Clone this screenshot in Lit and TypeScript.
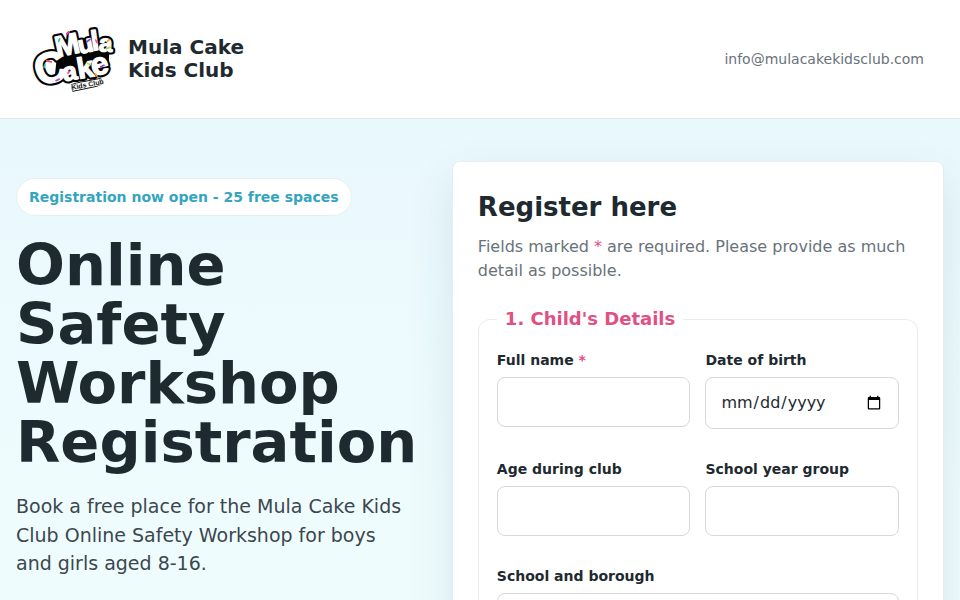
import { LitElement, html, svg, css } from "lit";
import { customElement } from "lit/decorators.js";

interface Letter { ch: string; x: number; y: number; size: number; turn: number }

const letters: Letter[] = [
  { ch: "M", x: 82, y: 114, size: 88, turn: -12 },
  { ch: "u", x: 149, y: 104, size: 74, turn: -12 },
  { ch: "l", x: 187, y: 94, size: 84, turn: -8 },
  { ch: "a", x: 206, y: 96, size: 72, turn: 2 },
  { ch: "C", x: 29, y: 202, size: 130, turn: -18 },
  { ch: "a", x: 103, y: 186, size: 76, turn: -10 },
  { ch: "k", x: 146, y: 179, size: 88, turn: -10 },
  { ch: "e", x: 189, y: 170, size: 94, turn: -12 },
];

const sprinkles = [
  ["#ef4aa5", "M110 44l8-7"], ["#27c9a0", "M86 66l3-8"],
  ["#8a41d8", "M170 68l10-8"], ["#ef4aa5", "M197 62l4 8"],
  ["#f59a35", "M232 66l6-5"], ["#9bdc3c", "M230 88l10-4"],
  ["#ee4258", "M50 124l14 4"], ["#27c9a0", "M42 144l3-8"],
  ["#a347de", "M78 184l10-5"], ["#ef4aa5", "M114 162l4-6"],
  ["#c5d83e", "M172 132l9 4"], ["#f1ae32", "M196 164l5 6"],
  ["#8a41d8", "M212 142l10-4"],
];

@customElement("club-logo")
export class ClubLogo extends LitElement {
  static styles = css`
    :host { display: block; flex: none; width: 80px; height: 70px; }
    svg { display: block; width: 100%; height: 100%; overflow: visible; }
    text { font-family: "Liberation Sans", sans-serif; font-weight: 700; stroke-linejoin: round; paint-order: stroke; }
    .shadow { fill: #050505; stroke: #050505; stroke-width: 17px; }
    .backing { fill: #050505; }
    .face { fill: #fff; stroke: #fff; stroke-width: 4px; }
    .small { fill: #111; stroke: #fff; stroke-width: 3px; font-size: 21px; }
    .plate { fill: #fff; stroke: #111; stroke-width: 3px; stroke-linejoin: round; }
    .sprinkle { fill: none; stroke-width: 5px; stroke-linecap: round; }
  `;

  private glyphs(kind: string) {
    return letters.map(l => svg`<text class=${kind} x=${l.x} y=${l.y} font-size=${l.size}
      transform="rotate(${l.turn} ${l.x} ${l.y})">${l.ch}</text>`);
  }

  render() {
    return html`<svg viewBox="18 14 240 210" role="img" aria-label="Mula Cake Kids Club logo">
      <path class="backing" d="M82 98L238 76L236 158L128 184L74 176Z"></path>
      ${this.glyphs("shadow")}
      ${this.glyphs("face")}
      ${sprinkles.map(([c, d]) => svg`<path class="sprinkle" stroke=${c} d=${d}></path>`)}
      <path class="plate" d="M124 196L144 190L212 177L218 193L200 201L128 216Z"></path>
      <text class="small" x="126" y="212" transform="rotate(-11 126 212)">Kids Club</text>
    </svg>`;
  }
}

@customElement("app-root")
export class AppRoot extends LitElement {
  static styles = css`
    :host {
      display: block;
      min-height: 100vh;
      color: #1e2930;
      background: #fff;
      font: 16px/24px "DejaVu Sans", sans-serif;
    }
    * { box-sizing: border-box; }
    .top {
      display: flex;
      align-items: center;
      justify-content: space-between;
      padding: 24px 36px;
      border-bottom: 1px solid #e0ebed;
      background: #fff;
    }
    .brand { display: flex; align-items: center; gap: 12px; color: inherit; text-decoration: none; }
    .name { font-size: 20px; line-height: 23px; font-weight: 700; }
    .mail { color: #68727a; font-size: 14px; text-decoration: none; }
    .hero {
      display: grid;
      grid-template-columns: minmax(0, 13fr) minmax(0, 16fr);
      gap: 36px;
      align-items: start;
      padding: 42px 16px;
      background: linear-gradient(180deg, #e9f8fd 0%, #effcfe 60%);
    }
    .intro { padding-top: 17px; }
    .badge {
      display: inline-block;
      padding: 6px 12px;
      border: 1px solid #e4f1f3;
      border-radius: 999px;
      background: #fff;
      color: #34a5bf;
      font-size: 14px;
      font-weight: 700;
      white-space: nowrap;
    }
    h1 { margin: 20px 0; font-size: clamp(40px, 6vw, 72px); line-height: 59px; font-weight: 700; }
    .lead { margin: 0; font-size: 19px; line-height: 1.5; color: #3c474e; }
    .card {
      padding: 25px;
      border: 1px solid #e6eef0;
      border-radius: 8px;
      background: #fff;
      box-shadow: 0 18px 45px rgba(30, 80, 80, 0.12);
    }
    h2 { margin: 4px 0 12px; font-size: 26px; line-height: 32px; font-weight: 700; }
    .note { margin: 0 0 24px; color: #68727a; }
    .star { color: #df5084; }
    fieldset {
      min-width: 0;
      margin: 0;
      padding: 18px;
      border: 1px solid #e8ecee;
      border-radius: 12px;
    }
    legend { padding: 0 8px; color: #df5084; font-size: 18px; font-weight: 700; }
    .fields { display: grid; grid-template-columns: repeat(2, minmax(0, 1fr)); gap: 29px 15px; align-items: start; }
    .field { display: grid; gap: 6px; }
    .wide { grid-column: 1 / -1; }
    label { font-size: 14px; line-height: 22px; font-weight: 700; }
    input {
      width: 100%;
      min-width: 0;
      height: 50px;
      margin: 0;
      padding: 12px 14px;
      border: 1px solid #d3d9dc;
      border-radius: 8px;
      background: #fff;
      color: #1e2930;
      font: inherit;
    }
    input[type="date"] { height: 52px; }
  `;

  render() {
    return html`
      <header class="top">
        <a class="brand" href="#"><club-logo></club-logo><span class="name">Mula Cake<br />Kids Club</span></a>
        <a class="mail" href="mailto:info@mulacakekidsclub.com">info@mulacakekidsclub.com</a>
      </header>
      <main class="hero">
        <section class="intro">
          <span class="badge">Registration now open - 25 free spaces</span>
          <h1>Online Safety Workshop Registration</h1>
          <p class="lead">Book a free place for the Mula Cake Kids Club Online Safety Workshop for boys and girls aged 8-16.</p>
        </section>
        <form class="card">
          <h2>Register here</h2>
          <p class="note">Fields marked <span class="star">*</span> are required. Please provide as much detail as possible.</p>
          <fieldset>
            <legend>1. Child's Details</legend>
            <div class="fields">
              <div class="field"><label for="name">Full name <span class="star">*</span></label><input id="name" type="text" required /></div>
              <div class="field"><label for="birth">Date of birth</label><input id="birth" type="date" /></div>
              <div class="field"><label for="age">Age during club</label><input id="age" type="text" /></div>
              <div class="field"><label for="year">School year group</label><input id="year" type="text" /></div>
              <div class="field wide"><label for="school">School and borough</label><input id="school" type="text" /></div>
            </div>
          </fieldset>
        </form>
      </main>
    `;
  }
}
